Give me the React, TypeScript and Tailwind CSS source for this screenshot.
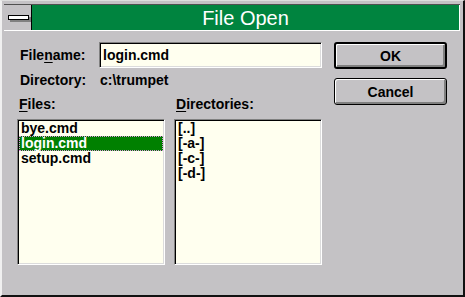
const files = ['bye.cmd', 'login.cmd', 'setup.cmd'];
const dirs = ['[..]', '[-a-]', '[-c-]', '[-d-]'];

const sunken =
  'border border-t-[#808080] border-l-[#808080] border-r-white border-b-white shadow-[inset_1px_1px_0_#000,inset_-1px_-1px_0_#dcdcdc]';

function ListBox({ items, selected }: { items: string[]; selected?: number }) {
  return (
    <div className={`w-[148px] h-[146px] bg-[#ffffef] ${sunken} px-[1px] py-[1px]`}>
      {items.map((item, i) =>
        i === selected ? (
          <div
            key={item}
            className="h-[15px] leading-[13px] pl-[1px] bg-[#008000] text-white border border-dotted border-[#e08ce0]"
          >
            {item}
          </div>
        ) : (
          <div key={item} className="h-[15px] leading-[15px] pl-[2px]">
            {item}
          </div>
        )
      )}
    </div>
  );
}

function Button({ label, isDefault }: { label: string; isDefault?: boolean }) {
  return (
    <button
      className={`w-[113px] h-[27px] rounded-[3px] bg-[#c4c2c5] border-black ${
        isDefault ? 'border-2' : 'border'
      } shadow-[inset_1px_1px_0_#fff,inset_-2px_-2px_0_#808080] text-[14px] font-bold text-black leading-none`}
    >
      {label}
    </button>
  );
}

export default function App() {
  return (
    <div
      className="w-[465px] h-[297px] bg-[#c4c2c5] border-t border-l-2 border-t-[#dedede] border-l-[#f0f0f0] border-r-2 border-b-2 border-r-[#111] border-b-[#111] pt-[3px] pl-[2px] pr-[3px] overflow-hidden text-black"
      style={{ fontFamily: '"Liberation Sans", Arial, sans-serif' }}
    >
      {/* Title bar */}
      <div className="flex h-[27px] border-t border-t-[#505050] border-b border-b-white">
        <div className="w-[28px] border-r border-r-black bg-[#c4c2c5] pl-[4px] pt-[10px]">
          <div className="w-[21px] h-[5px] bg-white border border-black shadow-[2px_2px_0_#808080]" />
        </div>
        <div className="flex-1 bg-[#00843f] border-r border-r-white flex items-center justify-center">
          <span className="text-white text-[20px] leading-none pt-[1px]">File Open</span>
        </div>
      </div>

      {/* Body */}
      <div className="flex pl-[13px] pt-[11px] gap-[12px] text-[14px] font-bold">
        <div className="w-[305px] flex flex-col">
          <div className="flex items-center h-[26px]">
            <div className="w-[82px] pl-[3px]">
              File<span className="underline underline-offset-2">n</span>ame:
            </div>
            <div className={`w-[223px] h-[26px] bg-[#ffffef] ${sunken} pl-[3px] flex items-center`}>
              login.cmd
            </div>
          </div>
          <div className="flex items-center h-[16px] mt-[4px]">
            <div className="w-[83px] pl-[3px]">Directory:</div>
            <div>c:\trumpet</div>
          </div>
          <div className="flex items-center h-[16px] mt-[8px]">
            <div className="w-[157px] pl-[2px]">
              <span className="underline underline-offset-2">F</span>iles:
            </div>
            <div className="pl-[2px]">
              <span className="underline underline-offset-2">D</span>irectories:
            </div>
          </div>
          <div className="flex gap-[9px] mt-[7px]">
            <ListBox items={files} selected={1} />
            <ListBox items={dirs} />
          </div>
        </div>

        <div className="flex flex-col gap-[9px]">
          <Button label="OK" isDefault />
          <Button label="Cancel" />
        </div>
      </div>
    </div>
  );
}
